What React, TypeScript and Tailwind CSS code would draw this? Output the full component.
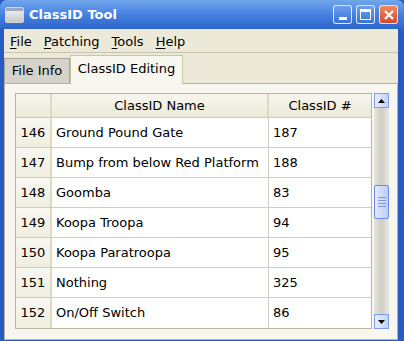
const rows = [
  { id: 146, name: 'Ground Pound Gate', classId: 187 },
  { id: 147, name: 'Bump from below Red Platform', classId: 188 },
  { id: 148, name: 'Goomba', classId: 83 },
  { id: 149, name: 'Koopa Troopa', classId: 94 },
  { id: 150, name: 'Koopa Paratroopa', classId: 95 },
  { id: 151, name: 'Nothing', classId: 325 },
  { id: 152, name: 'On/Off Switch', classId: 86 },
];

function Mnemonic({ first, rest }: { first: string; rest: string }) {
  return (
    <span>
      <span className="underline underline-offset-2">{first}</span>
      {rest}
    </span>
  );
}

function TitleButton({ kind }: { kind: 'min' | 'max' | 'close' }) {
  const close = kind === 'close';
  return (
    <div
      className={
        'flex h-[19px] w-[19px] items-center justify-center rounded-[3px] border border-white/80 ' +
        (close
          ? 'bg-linear-to-b from-[#ee8a64] to-[#d5482a]'
          : 'bg-linear-to-b from-[#6ea0ea] to-[#3a72d8]')
      }
    >
      {kind === 'min' && <div className="mt-[7px] h-[3px] w-[8px] bg-white" />}
      {kind === 'max' && (
        <div className="h-[11px] w-[11px] border border-t-[3px] border-white" />
      )}
      {kind === 'close' && (
        <svg width="12" height="12" viewBox="0 0 12 12">
          <path d="M2 2 L10 10 M10 2 L2 10" stroke="white" strokeWidth="2.2" />
        </svg>
      )}
    </div>
  );
}

function ScrollArrow({ up }: { up: boolean }) {
  return (
    <div className="flex h-[15px] w-[15px] items-center justify-center border border-[#7f9de8] bg-linear-to-r from-[#e8eeff] to-[#c3d2fb]">
      <svg width="7" height="4" viewBox="0 0 7 4">
        <path d={up ? 'M0 4 L3.5 0 L7 4 Z' : 'M0 0 L3.5 4 L7 0 Z'} fill="black" />
      </svg>
    </div>
  );
}

export default function App() {
  return (
    <div
      className="flex h-[341px] w-[404px] flex-col overflow-hidden bg-[#2a5bc4] text-[13px] text-black"
      style={{ fontFamily: '"DejaVu Sans", sans-serif' }}
    >
      {/* title bar */}
      <div className="flex h-[29px] shrink-0 items-center rounded-t-[7px] bg-linear-to-b from-[#72a6ec] via-[#4581e0] to-[#2f66cc] pl-[5px] pr-[6px]">
        <div className="flex h-[16px] w-[19px] flex-col overflow-hidden rounded-[2px] border border-[#d8d8d8] bg-linear-to-b from-[#f4f4f4] to-[#c8c8c8]">
          <div className="h-[3px] bg-[#9aa7c0]" />
        </div>
        <span className="ml-[5px] text-[13px] font-bold text-white">ClassID Tool</span>
        <div className="ml-auto flex gap-[4px]">
          <TitleButton kind="min" />
          <TitleButton kind="max" />
          <TitleButton kind="close" />
        </div>
      </div>

      {/* body */}
      <div className="mb-[4px] ml-[4px] mr-[6px] flex flex-1 flex-col bg-[#ece9d8]">
        {/* menu */}
        <div className="flex h-[24px] items-center gap-[12px] border-b border-[#c7c3b0] pl-[6px] pt-[2px]">
          <Mnemonic first="F" rest="ile" />
          <Mnemonic first="P" rest="atching" />
          <Mnemonic first="T" rest="ools" />
          <Mnemonic first="H" rest="elp" />
        </div>

        {/* tabs */}
        <div className="mt-[1px] flex h-[29px] items-end">
          <div className="flex h-[25px] w-[66px] items-center justify-center border border-b-0 border-[#a8a89a] bg-[#d4d2cb]">
            File Info
          </div>
          <div className="relative z-10 -mb-[1px] flex h-[29px] w-[113px] items-center justify-center border border-b-0 border-[#c9c5a6] bg-[#f7f6ef] pb-[2px]">
            ClassID Editing
          </div>
        </div>

        {/* panel */}
        <div className="flex flex-1 gap-[2px] border border-[#b5b39d] bg-[#f7f6ef] pb-[10px] pl-[10px] pr-[7px] pt-[9px]">
          <div className="flex w-[357px] flex-col border border-[#b9b69d] bg-white">
            <div className="flex h-[24px] border-b border-[#cfcbb0] bg-linear-to-b from-[#f7f6ef] to-[#ebe9d6]">
              <div className="w-[36px] border-r-2 border-[#dddabe]" />
              <div className="flex w-[217px] items-center justify-center border-r-2 border-[#dddabe]">
                ClassID Name
              </div>
              <div className="flex flex-1 items-center justify-center">ClassID #</div>
            </div>
            {rows.map((r) => (
              <div key={r.id} className="flex h-[30px] border-b border-[#cfccc0] last:border-b-0">
                <div className="flex w-[36px] items-center justify-center border-r-2 border-[#dddabe] bg-linear-to-b from-[#f8f7f1] to-[#efeee0]">
                  {r.id}
                </div>
                <div className="flex w-[217px] items-center border-r border-[#cfccc0] pl-[4px]">
                  {r.name}
                </div>
                <div className="flex flex-1 items-center pl-[4px]">{r.classId}</div>
              </div>
            ))}
          </div>

          {/* scrollbar */}
          <div className="flex w-[15px] flex-col">
            <ScrollArrow up />
            <div className="flex flex-1 flex-col bg-linear-to-r from-[#e6e5de] via-[#cfcec6] to-[#e6e5de]">
              <div className="h-[77px]" />
              <div className="flex h-[34px] flex-col items-center justify-center gap-[2px] rounded-[2px] border border-[#6d8be0] bg-linear-to-r from-[#e3e9ff] to-[#bccdfb]">
                <div className="h-px w-[8px] bg-[#7d96e0]" />
                <div className="h-px w-[8px] bg-[#7d96e0]" />
                <div className="h-px w-[8px] bg-[#7d96e0]" />
                <div className="h-px w-[8px] bg-[#7d96e0]" />
              </div>
            </div>
            <ScrollArrow up={false} />
          </div>
        </div>
      </div>
    </div>
  );
}
